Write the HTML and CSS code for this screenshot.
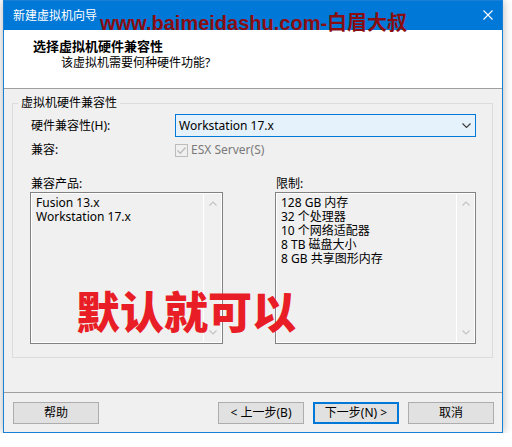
FILE: index.html
```html
<!DOCTYPE html>
<html lang="zh-CN">
<head>
    <meta charset="UTF-8">
    <meta name="viewport" content="width=device-width, initial-scale=1.0">
    <title>新建虚拟机向导</title>
    <link rel="stylesheet" href="styles.css">
</head>
<body>
    <div class="window">
        <div class="titlebar">
            <span class="title">新建虚拟机向导</span>
            <span class="site-mark">www.baimeidashu.com-白眉大叔</span>
            <svg class="close" width="10" height="10" viewBox="0 0 10 10">
                <path d="M0.5 0.5 L9.5 9.5 M9.5 0.5 L0.5 9.5" stroke="#fff" stroke-width="1.1" fill="none"/>
            </svg>
        </div>

        <div class="header">
            <h1>选择虚拟机硬件兼容性</h1>
            <p>该虚拟机需要何种硬件功能?</p>
        </div>

        <div class="main">
            <fieldset class="group">
                <legend>虚拟机硬件兼容性</legend>

                <div class="row">
                    <label>硬件兼容性(H):</label>
                    <div class="select">
                        <span>Workstation 17.x</span>
                        <svg width="9" height="5" viewBox="0 0 9 5">
                            <path d="M0.5 0.5 L4.5 4.5 L8.5 0.5" stroke="#3c3c3c" stroke-width="1.1" fill="none"/>
                        </svg>
                    </div>
                </div>

                <div class="row row-check">
                    <label>兼容:</label>
                    <div class="check">
                        <span class="box">
                            <svg width="11" height="11" viewBox="0 0 11 11">
                                <path d="M1.5 5.5 L4.3 8.3 L9.5 2.5" stroke="#bcbcbc" stroke-width="1.3" fill="none"/>
                            </svg>
                        </span>
                        ESX Server(S)
                    </div>
                </div>

                <div class="lists">
                    <div class="list-col products">
                        <div class="list-label">兼容产品:</div>
                        <div class="listbox">
                            <div class="items">
                                <div>Fusion 13.x</div>
                                <div>Workstation 17.x</div>
                            </div>
                            <div class="scroll">
                                <svg width="8" height="5" viewBox="0 0 8 5"><path d="M0.5 4.5 L4 1 L7.5 4.5" stroke="#c4c4c4" stroke-width="1.2" fill="none"/></svg>
                                <svg width="8" height="5" viewBox="0 0 8 5"><path d="M0.5 0.5 L4 4 L7.5 0.5" stroke="#c4c4c4" stroke-width="1.2" fill="none"/></svg>
                            </div>
                        </div>
                    </div>
                    <div class="list-col limits">
                        <div class="list-label">限制:</div>
                        <div class="listbox">
                            <div class="items">
                                <div>128 GB 内存</div>
                                <div>32 个处理器</div>
                                <div>10 个网络适配器</div>
                                <div>8 TB 磁盘大小</div>
                                <div>8 GB 共享图形内存</div>
                            </div>
                            <div class="scroll">
                                <svg width="8" height="5" viewBox="0 0 8 5"><path d="M0.5 4.5 L4 1 L7.5 4.5" stroke="#c4c4c4" stroke-width="1.2" fill="none"/></svg>
                                <svg width="8" height="5" viewBox="0 0 8 5"><path d="M0.5 0.5 L4 4 L7.5 0.5" stroke="#c4c4c4" stroke-width="1.2" fill="none"/></svg>
                            </div>
                        </div>
                    </div>
                </div>
            </fieldset>

            <div class="stamp">默认就可以</div>
        </div>

        <div class="footer">
            <button class="btn">帮助</button>
            <div class="nav">
                <button class="btn">&lt; 上一步(B)</button>
                <button class="btn primary">下一步(N) &gt;</button>
                <button class="btn">取消</button>
            </div>
        </div>
    </div>
</body>
</html>
```

FILE: styles.css
```css
* {
    box-sizing: border-box;
}

body {
    margin: 0;
    background: #fff;
    font-family: "Noto Sans", "Noto Sans CJK SC", sans-serif;
    font-size: 12px;
    color: #000;
}

.window {
    width: 500px;
    margin-left: 3px;
    border: 1px solid #1a7fd6;
    background: #f0f0f0;
    box-shadow: 0 0 9px rgba(0, 0, 0, 0.3);
}

.titlebar {
    position: relative;
    height: 29px;
    background: #0078d7;
    color: #fff;
    display: flex;
    align-items: center;
    padding: 0 9px;
}

.title {
    line-height: 16px;
}

.site-mark {
    position: absolute;
    left: 96px;
    top: 12px;
    font-family: "Liberation Sans", "Noto Sans CJK SC", sans-serif;
    font-size: 20px;
    font-weight: bold;
    line-height: 20px;
    color: #8a0d12;
    white-space: nowrap;
}

.close {
    margin-left: auto;
    margin-top: -1px;
}

.header {
    height: 59px;
    background: #fff;
    border-bottom: 1px solid #a0a0a0;
    padding: 8px 0 0 29px;
}

.header h1 {
    margin: 0;
    font-size: 13px;
    font-weight: bold;
    line-height: 16px;
}

.header p {
    margin: 1px 0 0 28px;
    line-height: 16px;
}

.main {
    position: relative;
    height: 304px;
    padding: 6px 9px 0 8px;
    border-bottom: 1px solid #a0a0a0;
}

.group {
    margin: 0;
    border: 1px solid #dcdcdc;
    padding: 3px 16px 13px 17px;
    min-width: 0;
}

.group legend {
    margin-left: -12px;
    padding: 0 3px;
    line-height: 16px;
}

.row {
    display: flex;
    align-items: center;
}

.row label {
    width: 145px;
    padding-left: 1px;
    line-height: 16px;
}

.select {
    width: 301px;
    height: 23px;
    border: 1px solid #0078d7;
    background: #e5f1fb;
    display: flex;
    align-items: center;
    justify-content: space-between;
    padding: 0 4px 0 3px;
    line-height: 16px;
}

.row-check {
    margin-top: 5px;
    height: 16px;
}

.check {
    display: flex;
    align-items: center;
    gap: 3px;
    color: #7a7a7a;
    line-height: 16px;
}

.check .box {
    width: 13px;
    height: 13px;
    border: 1px solid #bcbcbc;
    display: flex;
    align-items: center;
    justify-content: center;
}

.lists {
    display: flex;
    margin-top: 18px;
}

.products {
    width: 193px;
}

.limits {
    width: 201px;
    margin-left: 52px;
}

.list-label {
    line-height: 16px;
    padding-left: 1px;
}

.listbox {
    height: 152px;
    border: 1px solid #828282;
    box-shadow: inset 0 0 0 1px #fff;
    display: flex;
}

.items {
    flex: 1;
    padding: 3px 0 0 5px;
    line-height: 14px;
}

.scroll {
    width: 18px;
    margin: 1px 1px 1px 0;
    border-left: 1px solid #fff;
    display: flex;
    flex-direction: column;
    justify-content: space-between;
    align-items: center;
    padding: 7px 0 7px;
}

.stamp {
    position: absolute;
    left: 72px;
    top: 199px;
    font-family: "Noto Sans CJK SC", sans-serif;
    font-size: 44px;
    font-weight: 900;
    line-height: 44px;
    color: #e81d25;
    white-space: nowrap;
}

.footer {
    height: 39px;
    padding: 9px 8px 0 9px;
    display: flex;
    align-items: flex-start;
}

.nav {
    margin-left: auto;
    display: flex;
    gap: 9px;
}

.btn {
    width: 86px;
    height: 22px;
    border: 1px solid #adadad;
    background: #e1e1e1;
    font-family: "Noto Sans", "Noto Sans CJK SC", sans-serif;
    font-size: 12px;
    line-height: 16px;
    color: #000;
    padding: 0;
}

.btn.primary {
    border: 2px solid #0078d7;
}
```
